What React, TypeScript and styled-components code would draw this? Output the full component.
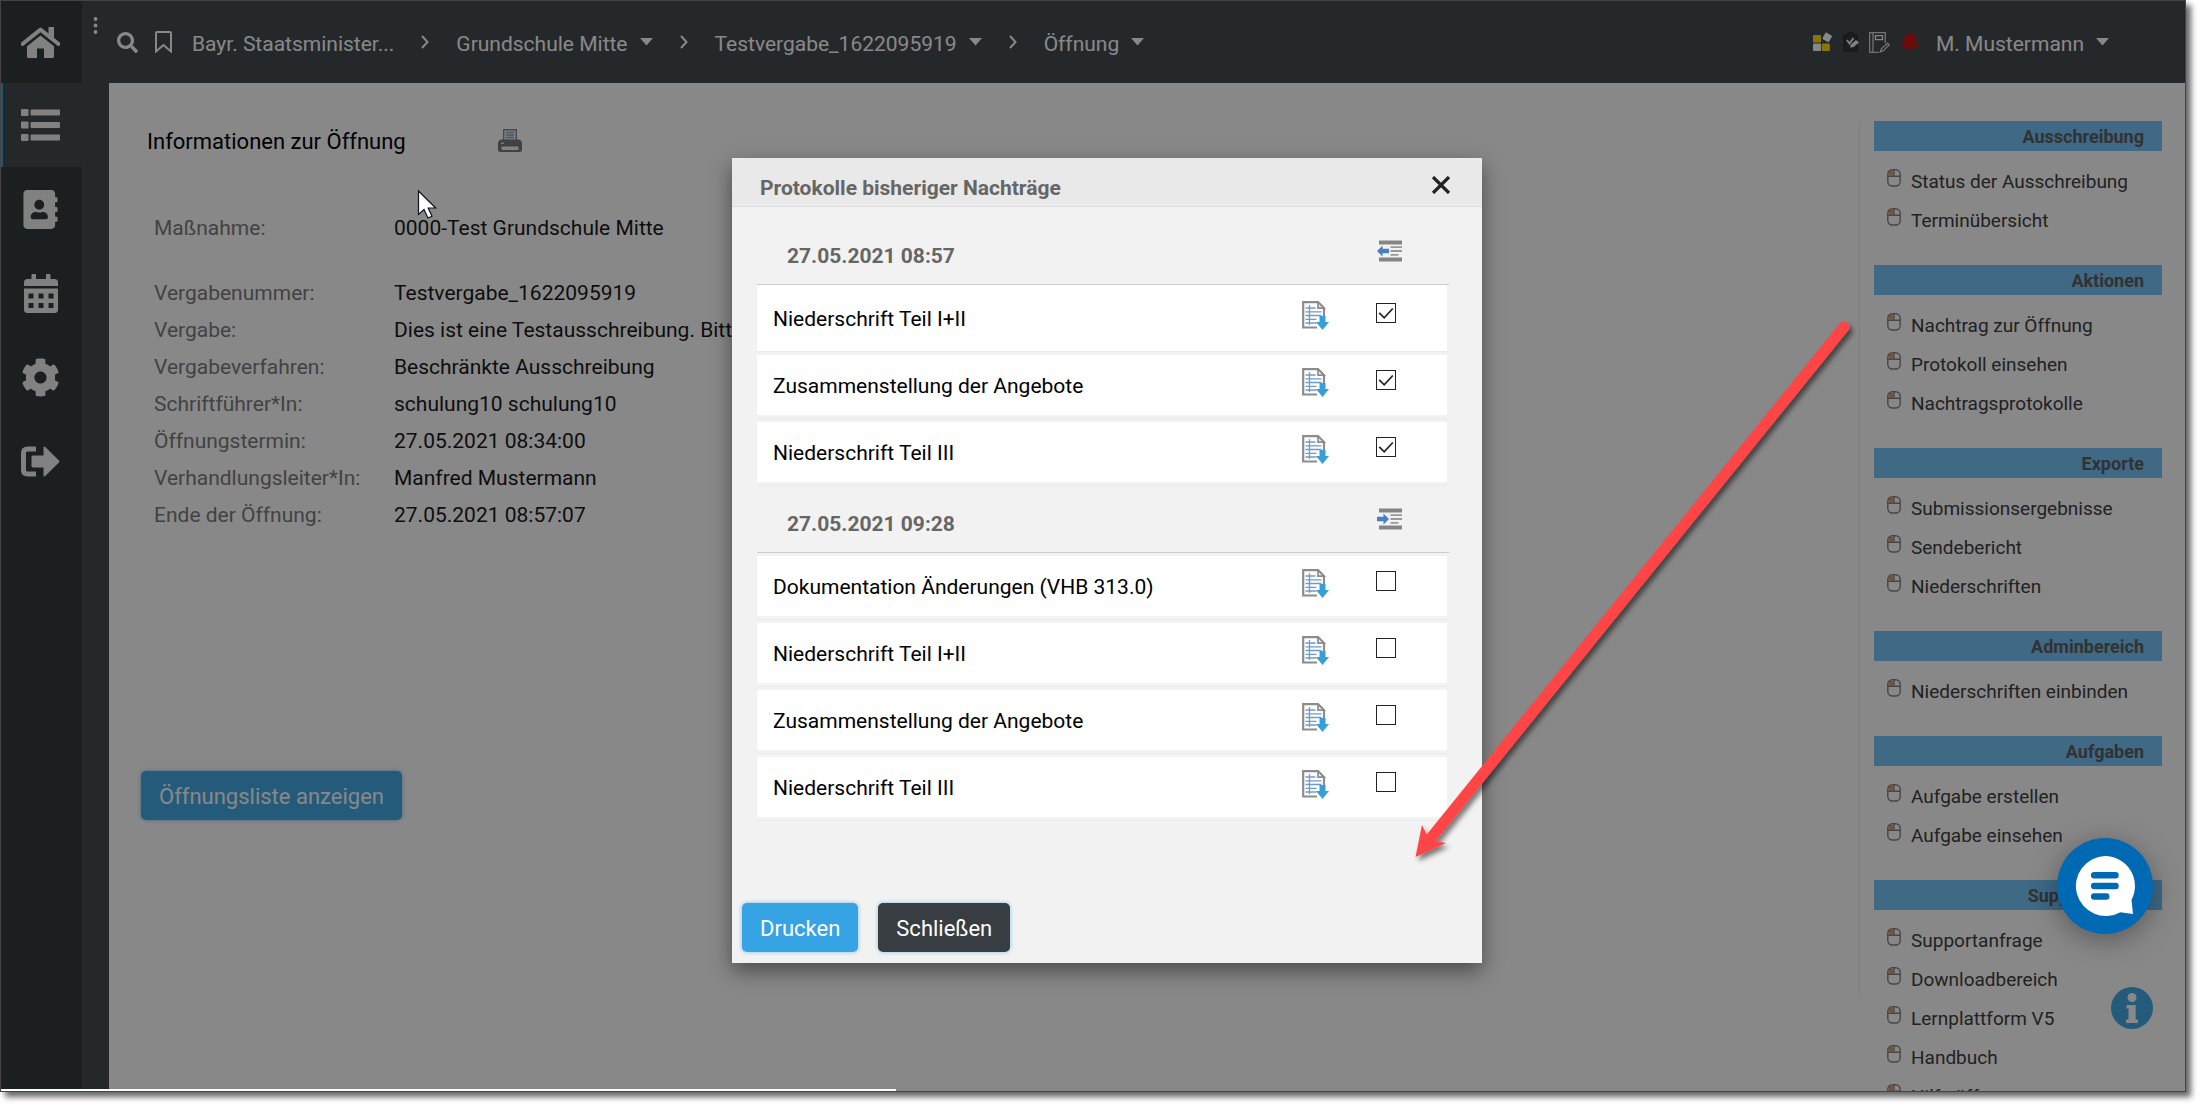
import React, { useState } from "react";
import styled, { createGlobalStyle } from "styled-components";
import { FaAddressBook, FaBell, FaCog, FaSearch } from "react-icons/fa";

const GlobalStyle = createGlobalStyle`
  *, *::before, *::after { box-sizing: border-box; }
  body { margin: 0; background: #fff; font-family: Roboto, "Liberation Sans", sans-serif; font-size: 21px; overflow: hidden; }
  button { font: inherit; color: inherit; background: none; border: 0; padding: 0; cursor: pointer; }
  a { color: inherit; text-decoration: none; }
  ul, dl, dd, h1, h2 { margin: 0; padding: 0; list-style: none; }
  svg { display: block; flex: none; }
`;

const Page = styled.div`
  height: 100vh;
  padding: 0 15px 15px 0;
`;

const Frame = styled.div`
  position: relative;
  display: flex;
  height: 100%;
  overflow: hidden;
  border: 1px solid #444;
  background: #fff;
`;

const FrameShadow = styled.div`
  height: 100%;
  box-shadow: 5px 5px 6px rgba(0, 0, 0, 0.6);
`;

const SideNav = styled.nav`
  flex: none;
  width: 81px;
  background: #343a3a;
  color: #f2f2f2;
`;

const SideLink = styled.a<{ $active?: boolean }>`
  display: flex;
  align-items: center;
  justify-content: center;
  height: 84px;
  padding-right: 4px;
  border-left: 2px solid ${(p) => (p.$active ? "#3aa5e0" : "transparent")};
  background: ${(p) => (p.$active ? "#444b50" : "transparent")};

  &:first-child { height: 82px; }
`;

const Column = styled.div`
  flex: 1;
  min-width: 0;
  display: flex;
  flex-direction: column;
  background: #444b50;
`;

const TopBar = styled.header`
  flex: none;
  display: flex;
  align-items: center;
  height: 82px;
  padding: 0 76px 0 11px;
  color: #fff;
`;

const DotsButton = styled.button`
  align-self: flex-start;
  margin: 16px 19px 0 0;
`;

const IconButton = styled.button<{ $gap?: number }>`
  margin-right: ${(p) => p.$gap ?? 0}px;
`;

const Crumbs = styled.div`
  display: flex;
  align-items: center;
  gap: 27px;
  flex: 1;
`;

const MenuButton = styled.button`
  display: flex;
  align-items: center;
  gap: 12px;
  line-height: 24px;
  white-space: nowrap;
`;

const MenuText = styled.span`
  padding-top: 4px;
`;

const Tools = styled.div`
  display: flex;
  align-items: center;
  gap: 10px;
  margin-right: 16px;
`;

const Main = styled.main`
  flex: 1;
  min-height: 0;
  display: flex;
  align-items: flex-start;
  margin-left: 27px;
  padding: 38px 23px 0 32px;
  background: #fff;
  overflow: hidden;
`;

const Info = styled.section`
  flex: 1;
  min-width: 0;
  border-right: 1px solid #ececec;
  padding-bottom: 174px;
`;

const TitleRow = styled.div`
  display: flex;
  align-items: center;
  gap: 92px;
  height: 40px;
  padding-left: 6px;
`;

const Title = styled.h1`
  font-size: 22px;
  font-weight: 400;
  color: #000;
`;

const Details = styled.dl<{ $top: number }>`
  display: grid;
  grid-template-columns: 240px 1fr;
  margin-top: ${(p) => p.$top}px;
  padding-left: 13px;
  line-height: 37px;
`;

const Term = styled.dt`
  color: #7d7d7d;
`;

const Value = styled.dd`
  color: #1a1a1a;
  white-space: nowrap;
`;

const ActionButton = styled.button<{ $tone: string; $top?: number }>`
  height: 49px;
  margin-top: ${(p) => p.$top ?? 0}px;
  padding: 1px 18px 0;
  border-radius: 5px;
  background: ${(p) => p.$tone};
  box-shadow: 0 0 4px rgba(54, 163, 228, 0.6);
  color: #fff;
  font-size: 22px;
`;

const Aside = styled.aside`
  flex: none;
  width: 302px;
  padding-left: 14px;
`;

const AsideTitle = styled.h2`
  height: 30px;
  padding-right: 18px;
  background: #76c5fa;
  color: #5e5e5e;
  font-size: 18px;
  font-weight: 700;
  line-height: 31px;
  text-align: right;
`;

const AsideList = styled.ul`
  padding: 11px 0 25px 13px;
`;

const AsideLink = styled.a`
  display: flex;
  align-items: center;
  gap: 10px;
  height: 39px;
  color: #404040;
  font-size: 19px;
  white-space: nowrap;

  svg { margin-bottom: 7px; }
`;

const Backdrop = styled.div`
  position: absolute;
  inset: 0;
  display: flex;
  justify-content: center;
  align-items: flex-start;
  padding: 157px 0 0 28px;
  background: rgba(0, 0, 0, 0.467);
`;

const Dialog = styled.div`
  width: 750px;
  background: #f2f2f2;
  box-shadow: 0 8px 20px rgba(0, 0, 0, 0.45);
`;

const DialogHead = styled.div`
  display: flex;
  align-items: center;
  justify-content: space-between;
  height: 49px;
  padding: 5px 31px 0 28px;
  border-bottom: 1px solid #dedede;
  background: #e9e9e9;
  color: #222;
`;

const DialogTitle = styled.h2`
  padding-top: 6px;
  color: #666;
  font-size: 21px;
  font-weight: 700;
  line-height: 24px;
`;

const DialogBody = styled.div`
  padding: 11px 33px 82px 25px;
`;

const GroupHead = styled.div`
  display: flex;
  align-items: center;
  justify-content: space-between;
  height: 67px;
  padding: 0 47px 0 30px;
  border-bottom: 1px solid #ccc;
`;

const GroupDate = styled.h2`
  padding-top: 10px;
  color: #666;
  font-size: 21px;
  font-weight: 700;
  line-height: 24px;
`;

const DocItem = styled.li<{ $flush: boolean }>`
  height: 67px;
  margin-right: 2px;
  padding: ${(p) => (p.$flush ? "0" : "3px 0")};
  border-bottom: 1px solid #ebebeb;
`;

const DocRow = styled.div<{ $flush: boolean }>`
  display: grid;
  grid-template-columns: 1fr 27px 20px;
  column-gap: 47px;
  align-items: start;
  height: 100%;
  padding: ${(p) => (p.$flush ? "16px" : "13px")} 51px 0 16px;
  background: #fff;
`;

const DocName = styled.label`
  padding-top: 6px;
  color: #000;
  line-height: 24px;
`;

const TickBox = styled.span`
  position: relative;
  width: 20px;
  height: 20px;
  margin-top: 2px;

  svg { position: absolute; inset: 0; pointer-events: none; }
`;

const Tick = styled.input`
  display: block;
  width: 20px;
  height: 20px;
  margin: 0;
  appearance: none;
  border: 1px solid #222;
  background: #fff;
`;

const DialogFoot = styled.div`
  display: flex;
  gap: 20px;
  padding: 0 10px 11px;
`;

const ProgressLine = styled.div`
  position: absolute;
  left: 0;
  bottom: 0;
  width: 41%;
  height: 2px;
  background: #fff;
`;

const ChatButton = styled.button`
  position: absolute;
  right: 32px;
  bottom: 157px;
  width: 96px;
  height: 96px;
  border-radius: 50%;
  background: #0069b4;
  box-shadow: 0 6px 28px rgba(0, 0, 0, 0.35);
`;

const InfoButton = styled.button`
  position: absolute;
  right: 32px;
  bottom: 62px;
  width: 42px;
  height: 42px;
`;

const Floating = styled.svg<{ $x: number; $y: number }>`
  position: absolute;
  left: ${(p) => p.$x}px;
  top: ${(p) => p.$y}px;
  pointer-events: none;
`;

const HomeIcon = () => (
  <svg width="39" height="31" viewBox="0 0 39 31" fill="currentColor">
    <path d="M27.5 0h5.5v12h-5.5z" />
    <path d="M1.5 17 19.5 2.6 37.5 17" fill="none" stroke="currentColor" strokeWidth="4" strokeLinecap="round" strokeLinejoin="round" />
    <path d="M19.5 8.5 33 19.3V29.5q0 1.5-1.5 1.5H23V21.5h-7V31H7.5Q6 31 6 29.5V19.3z" />
  </svg>
);

const ListIcon = () => (
  <svg width="39" height="32" viewBox="0 0 39 32" fill="currentColor">
    {[0, 12.5, 25].map((y) => (
      <g key={y}>
        <rect x="0" y={y} width="7.5" height="7" rx="1" />
        <rect x="9.5" y={y + 0.5} width="29.5" height="6" rx="1" />
      </g>
    ))}
  </svg>
);

const CalendarIcon = () => (
  <svg width="34" height="39" viewBox="0 0 34 39" fill="currentColor">
    <path d="M0 12V8.5Q0 5 3.5 5H7.5V1q0-1 1-1h2.5q1 0 1 1v4h10V1q0-1 1-1h2.5q1 0 1 1v4H30.5Q34 5 34 8.5V12z" />
    <path
      fillRule="evenodd"
      d="M0 14.5h34v21q0 3.5-3.5 3.5h-27Q0 39 0 35.5zM4.5 19.5v5h5v-5zM14.5 19.5v5h5v-5zM24.5 19.5v5h5v-5zM4.5 29v5h5v-5zM14.5 29v5h5v-5zM24.5 29v5h5v-5z"
    />
  </svg>
);

const SignOutIcon = () => (
  <svg width="39" height="31" viewBox="0 0 39 31">
    <path d="M15 3H6.5Q2.5 3 2.5 7v17q0 4 4 4H15" fill="none" stroke="currentColor" strokeWidth="5" />
    <path d="M10.5 11q0-1.5 1.5-1.5h10.5V1.5q0-1.5 1.5-.8L38 14.5q1 1 0 2L24 30.3q-1.5.7-1.5-.8v-8H12q-1.5 0-1.5-1.5z" fill="currentColor" />
  </svg>
);

const DotsIcon = () => (
  <svg width="5" height="17" viewBox="0 0 5 17" fill="currentColor">
    <circle cx="2.5" cy="2" r="1.9" />
    <circle cx="2.5" cy="8.5" r="1.9" />
    <circle cx="2.5" cy="15" r="1.9" />
  </svg>
);

const BookmarkIcon = () => (
  <svg width="17" height="22" viewBox="0 0 17 22" fill="none" stroke="currentColor" strokeWidth="2">
    <path d="M1 2q0-1 1-1h13q1 0 1 1v18.5l-7.5-6.5L1 20.5z" />
  </svg>
);

const Chevron = () => (
  <svg width="8" height="14" viewBox="0 0 8 14" fill="none" stroke="currentColor" strokeWidth="2">
    <path d="M1 1l5.5 6L1 13" />
  </svg>
);

const Caret = () => (
  <svg width="13" height="8" viewBox="0 0 13 8" fill="currentColor">
    <path d="M0 0h13L6.5 7.5z" />
  </svg>
);

const TilesIcon = () => (
  <svg width="20" height="20" viewBox="0 0 20 20">
    <rect x="0" y="3" width="8" height="7.5" rx="1" fill="#ffe010" />
    <rect x="0" y="11.5" width="8" height="7.5" rx="1" fill="#fff" />
    <rect x="8.8" y="11.5" width="8" height="7.5" rx="1" fill="#ffe010" />
    <rect x="10.5" y="1.5" width="7.5" height="7.5" rx="1" fill="#fff" transform="rotate(30 14.2 5.2)" />
  </svg>
);

const ClipboardIcon = () => (
  <svg width="16" height="20" viewBox="0 0 16 20">
    <path d="M1 3h4V1.5Q5 0 6.5 0h2Q10 0 10 1.5V3h4v16H1z" fill="#34383c" stroke="#26292c" strokeWidth="1.2" />
    <path d="M4 8l2.5 3.5L10.5 6" fill="none" stroke="#fff" strokeWidth="1.7" />
    <path d="M7 15.5l.8-3L13 8l3 2.5-5.5 4.5z" fill="#f4f4f4" />
  </svg>
);

const NotebookIcon = () => (
  <svg width="21" height="21" viewBox="0 0 21 21" fill="none" stroke="#d8d8d8" strokeWidth="1.3">
    <path d="M10 20.3H.7V.7h15.6V11M4 .7v19.6" />
    <path d="M6.5 3.7h7v4h-7z" stroke="#fff" />
    <path d="M11.5 19.8l1-3.3 6-5.3 1.6 1.8-5.8 5.7z" />
  </svg>
);

const PrinterIcon = () => (
  <svg width="24" height="25" viewBox="0 0 24 25">
    <path d="M5.7 12V.7h12.6V12" fill="#eee" stroke="#8a8a8a" strokeWidth="1.4" />
    <path d="M8 3.5h8M8 6h8M8 8.5h8" stroke="#7fa9c9" strokeWidth="1.5" />
    <path d="M3 10.5h18q3 1 3 4v6q0 2.5-2.5 2.5h-19Q0 23 0 20.5v-6q0-3 3-4z" fill="#7a7a7a" />
    <rect x="3.5" y="17.5" width="17" height="3.5" rx="1" fill="#f4f4f4" />
    <rect x="3" y="13.5" width="3" height="1.5" fill="#ddd" />
  </svg>
);

const MouseIcon = () => (
  <svg width="14" height="18" viewBox="0 0 14 18" fill="none" stroke="#858585" strokeWidth="1.4">
    <rect x="2" y="2" width="4" height="4.5" fill="#e39a5c" stroke="none" />
    <rect x=".8" y=".8" width="12.4" height="16.2" rx="4.5" />
    <path d="M1 7.3h12M7 1v6.3" />
  </svg>
);

const SheetIcon = () => (
  <svg width="27" height="29" viewBox="0 0 27 29" fill="none">
    <path d="M15 26.5H1.2V1.2H16l6 6V16" stroke="#8c8c8c" strokeWidth="2.2" />
    <path d="M16 1.2v6h6z" fill="#eee" stroke="#8c8c8c" strokeWidth="1.7" />
    <path d="M3.5 7h10M3.5 10.8h16M3.5 14.5h16M3.5 18.3h11M3.5 22h11M7.5 4v20" stroke="#6d9bcb" strokeWidth="1.3" />
    <path d="M17.5 15h6v6h3.5l-6.5 8-6.5-8h3.5z" fill="#389fd6" />
  </svg>
);

const IndentIcon = ({ right }: { right?: boolean }) => (
  <svg width="25" height="22" viewBox="0 0 25 22">
    <path d="M2 2.5h23M2 19.5h23" stroke="#858585" strokeWidth="4" />
    <path d="M13.5 7.2H25M13.5 11H25M13.5 14.8h8" stroke="#999" strokeWidth="1.8" />
    <path
      d={right ? "M12 11L6.5 5.5v3.2H0v4.6h6.5v3.2z" : "M0 11l5.5-5.5v3.2H12v4.6H5.5v3.2z"}
      fill="#4a80bf"
    />
  </svg>
);

const CloseIcon = () => (
  <svg width="20" height="18" viewBox="0 0 20 18" stroke="currentColor" strokeWidth="3.2">
    <path d="M2 1l16 16M18 1L2 17" />
  </svg>
);

const CheckMark = () => (
  <svg width="20" height="20" viewBox="0 0 20 20" fill="none" stroke="#222" strokeWidth="1.7">
    <path d="M3.2 9.8l5 5L16.8 5.5" />
  </svg>
);

const ChatIcon = () => (
  <svg width="96" height="96" viewBox="0 0 96 96">
    <path d="M48 18a30 30 0 0 1 26.5 44l1.5 14-12.5-1.8A30 30 0 1 1 48 18z" fill="#fff" />
    <path d="M37.2 37.3h21.3M37.2 48h21.3M37.2 58.5h12" stroke="#0069b4" strokeWidth="6.5" strokeLinecap="round" />
  </svg>
);

const InfoIcon = () => (
  <svg width="42" height="42" viewBox="0 0 42 42">
    <circle cx="21" cy="21" r="21" fill="#245b7b" />
    <circle cx="21" cy="10.5" r="4.5" fill="#888" />
    <path d="M15.5 18h9.2v14.5H27V36H15v-3.5h2.5v-11h-2z" fill="#888" />
  </svg>
);

const facts: [string, string][] = [
  ["Vergabenummer:", "Testvergabe_1622095919"],
  ["Vergabe:", "Dies ist eine Testausschreibung. Bitte"],
  ["Vergabeverfahren:", "Beschränkte Ausschreibung"],
  ["Schriftführer*In:", "schulung10 schulung10"],
  ["Öffnungstermin:", "27.05.2021 08:34:00"],
  ["Verhandlungsleiter*In:", "Manfred Mustermann"],
  ["Ende der Öffnung:", "27.05.2021 08:57:07"],
];

const menus: { title: string; links: string[] }[] = [
  { title: "Ausschreibung", links: ["Status der Ausschreibung", "Terminübersicht"] },
  { title: "Aktionen", links: ["Nachtrag zur Öffnung", "Protokoll einsehen", "Nachtragsprotokolle"] },
  { title: "Exporte", links: ["Submissionsergebnisse", "Sendebericht", "Niederschriften"] },
  { title: "Adminbereich", links: ["Niederschriften einbinden"] },
  { title: "Aufgaben", links: ["Aufgabe erstellen", "Aufgabe einsehen"] },
  {
    title: "Supportcenter",
    links: ["Supportanfrage", "Downloadbereich", "Lernplattform V5", "Handbuch", "Hilfe öffnen"],
  },
];

const groups = [
  {
    date: "27.05.2021 08:57",
    checked: true,
    docs: ["Niederschrift Teil I+II", "Zusammenstellung der Angebote", "Niederschrift Teil III"],
  },
  {
    date: "27.05.2021 09:28",
    checked: false,
    docs: [
      "Dokumentation Änderungen (VHB 313.0)",
      "Niederschrift Teil I+II",
      "Zusammenstellung der Angebote",
      "Niederschrift Teil III",
    ],
  },
];

function DocumentItem({ id, name, initial, flush }: { id: string; name: string; initial: boolean; flush: boolean }) {
  const [checked, setChecked] = useState(initial);
  return (
    <DocItem $flush={flush}>
      <DocRow $flush={flush}>
        <DocName htmlFor={id}>{name}</DocName>
        <IconButton type="button" aria-label={`${name} herunterladen`}>
          <SheetIcon />
        </IconButton>
        <TickBox>
          <Tick id={id} type="checkbox" checked={checked} onChange={(e) => setChecked(e.target.checked)} />
          {checked && <CheckMark />}
        </TickBox>
      </DocRow>
    </DocItem>
  );
}

export default function App() {
  return (
    <Page>
      <GlobalStyle />
      <FrameShadow>
        <Frame>
          <SideNav aria-label="Hauptnavigation">
            <SideLink href="#start" aria-label="Startseite"><HomeIcon /></SideLink>
            <SideLink href="#liste" aria-label="Liste" $active><ListIcon /></SideLink>
            <SideLink href="#adressen" aria-label="Adressbuch"><FaAddressBook size={39} /></SideLink>
            <SideLink href="#kalender" aria-label="Kalender"><CalendarIcon /></SideLink>
            <SideLink href="#einstellungen" aria-label="Einstellungen"><FaCog size={39} /></SideLink>
            <SideLink href="#abmelden" aria-label="Abmelden"><SignOutIcon /></SideLink>
          </SideNav>

          <Column>
            <TopBar>
              <DotsButton type="button" aria-label="Menü"><DotsIcon /></DotsButton>
              <IconButton type="button" aria-label="Suche" $gap={17}><FaSearch size={21} /></IconButton>
              <IconButton type="button" aria-label="Lesezeichen" $gap={20}><BookmarkIcon /></IconButton>
              <Crumbs>
                <MenuButton type="button"><MenuText>Bayr. Staatsminister...</MenuText></MenuButton>
                <Chevron />
                <MenuButton type="button"><MenuText>Grundschule Mitte</MenuText><Caret /></MenuButton>
                <Chevron />
                <MenuButton type="button"><MenuText>Testvergabe_1622095919</MenuText><Caret /></MenuButton>
                <Chevron />
                <MenuButton type="button"><MenuText>Öffnung</MenuText><Caret /></MenuButton>
              </Crumbs>
              <Tools>
                <IconButton type="button" aria-label="Kacheln"><TilesIcon /></IconButton>
                <IconButton type="button" aria-label="Aufgaben"><ClipboardIcon /></IconButton>
                <IconButton type="button" aria-label="Notizen"><NotebookIcon /></IconButton>
                <IconButton type="button" aria-label="Meldungen"><FaBell size={20} color="#cb1616" /></IconButton>
              </Tools>
              <MenuButton type="button"><MenuText>M. Mustermann</MenuText><Caret /></MenuButton>
            </TopBar>

            <Main>
              <Info>
                <TitleRow>
                  <Title>Informationen zur Öffnung</Title>
                  <IconButton type="button" aria-label="Seite drucken"><PrinterIcon /></IconButton>
                </TitleRow>
                <Details $top={49}>
                  <Term>Maßnahme:</Term>
                  <Value>0000-Test Grundschule Mitte</Value>
                </Details>
                <Details $top={28}>
                  {facts.map(([term, value]) => (
                    <React.Fragment key={term}>
                      <Term>{term}</Term>
                      <Value>{value}</Value>
                    </React.Fragment>
                  ))}
                </Details>
                <ActionButton type="button" $tone="#44abe7" $top={237}>Öffnungsliste anzeigen</ActionButton>
              </Info>

              <Aside>
                {menus.map((menu) => (
                  <section key={menu.title}>
                    <AsideTitle>{menu.title}</AsideTitle>
                    <AsideList>
                      {menu.links.map((link) => (
                        <li key={link}>
                          <AsideLink href="#aktion"><MouseIcon />{link}</AsideLink>
                        </li>
                      ))}
                    </AsideList>
                  </section>
                ))}
              </Aside>
            </Main>
          </Column>

          <Backdrop>
            <Dialog role="dialog" aria-labelledby="dialog-title">
              <DialogHead>
                <DialogTitle id="dialog-title">Protokolle bisheriger Nachträge</DialogTitle>
                <IconButton type="button" aria-label="Dialog schließen"><CloseIcon /></IconButton>
              </DialogHead>
              <DialogBody>
                {groups.map((group, g) => (
                  <section key={group.date}>
                    <GroupHead>
                      <GroupDate>{group.date}</GroupDate>
                      <IconButton type="button" aria-label="Alle umschalten"><IndentIcon right={!group.checked} /></IconButton>
                    </GroupHead>
                    <ul>
                      {group.docs.map((doc, d) => (
                        <DocumentItem key={doc} id={`doc-${g}-${d}`} name={doc} initial={group.checked} flush={g === 0 && d === 0} />
                      ))}
                    </ul>
                  </section>
                ))}
              </DialogBody>
              <DialogFoot>
                <ActionButton type="button" $tone="#36a3e4">Drucken</ActionButton>
                <ActionButton type="button" $tone="#373d41">Schließen</ActionButton>
              </DialogFoot>
            </Dialog>
          </Backdrop>

          <ProgressLine />
          <InfoButton type="button" aria-label="Information"><InfoIcon /></InfoButton>
          <ChatButton type="button" aria-label="Chat öffnen"><ChatIcon /></ChatButton>

          <Floating $x={1400} $y={310} width="470" height="570" viewBox="1401 311 470 570">
            <defs>
              <filter id="arrow-shadow" x="-10%" y="-10%" width="120%" height="120%">
                <feDropShadow dx="3" dy="4" stdDeviation="2.5" floodColor="#000" floodOpacity="0.5" />
              </filter>
            </defs>
            <g filter="url(#arrow-shadow)" fill="#ff4444">
              <path d="M1844 327L1431 838" stroke="#ff4444" strokeWidth="11" strokeLinecap="round" />
              <path d="M1415.5 857L1422 825L1427 835L1435 841L1446 843z" />
            </g>
          </Floating>
          <Floating $x={416} $y={188} width="22" height="31" viewBox="0 0 22 31">
            <path d="M1.5 2v23.5l5.5-5 4 8.5 4-1.8-3.8-8.2h7.5z" fill="#fff" stroke="#112" strokeWidth="1.2" />
          </Floating>
        </Frame>
      </FrameShadow>
    </Page>
  );
}
